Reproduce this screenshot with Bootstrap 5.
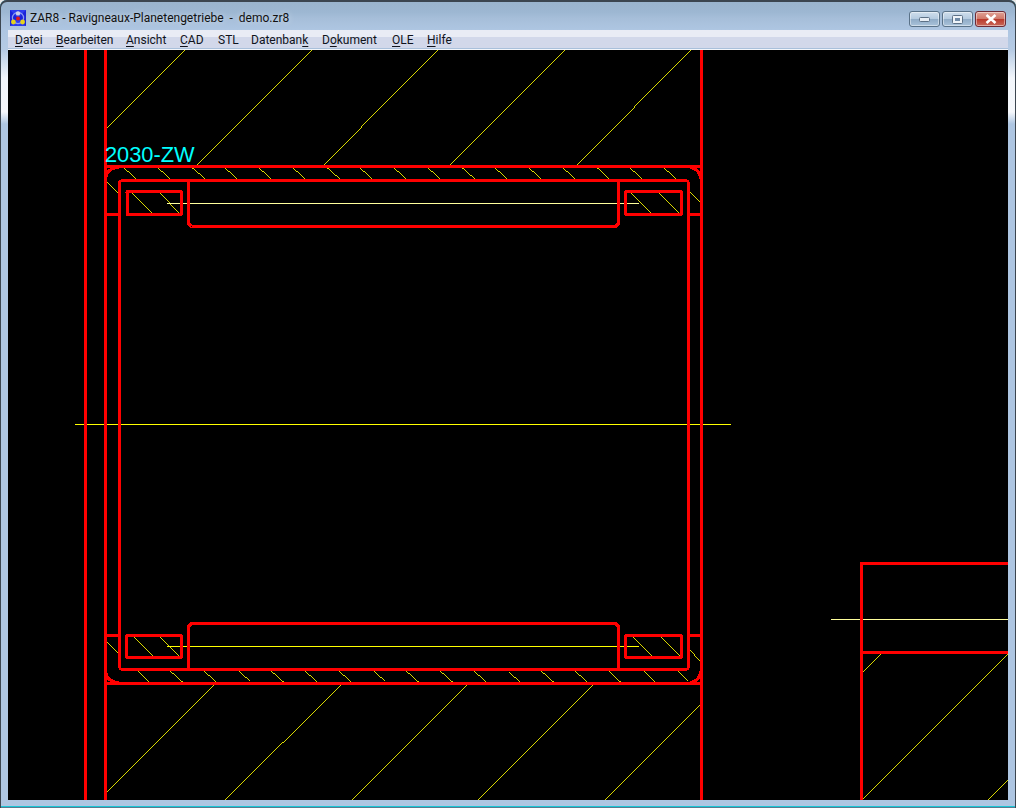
<!DOCTYPE html>
<html lang="de">
<head>
<meta charset="utf-8">
<title>ZAR8 - Ravigneaux-Planetengetriebe - demo.zr8</title>
<link href="https://cdn.jsdelivr.net/npm/bootstrap@5.3.0/dist/css/bootstrap.min.css" rel="stylesheet">
<style>
html,body{margin:0;height:100%;background:#e9e9e9;overflow:hidden}
.aero-win{width:1016px;height:808px;border-radius:7px 7px 0 0;box-shadow:inset 0 1px 0 1px #3c4650,inset 0 0 0 1px #5b7a90,inset 0 -1px 0 1px #19c6d6;
 background:linear-gradient(180deg,#9ab4cd 0,#9db7d2 12px,#a6bed9 18px,#aec6e2 30px,#b6cbe4 50px,#f2f6fb 78px,#f6f8fc 112px,#aec6e2 124px,#aec6e2 100%);
 padding:0 8px 8px;font-family:Roboto,"Open Sans",sans-serif;color:#10131c}
.title-strip{height:30px;margin:0 -7px;padding:0 9px}
.app-glyph{width:16px;height:16px;margin:10px 4px 0 0;flex:none}
.title-text{font-size:12px;line-height:16px;white-space:pre;color:#111;margin-top:10px;text-shadow:0 0 6px rgba(255,255,255,.55)}
.cap-group{margin-top:11px;gap:2px}
.cap-btn{width:31px;height:16px;border:1px solid #5a7288;border-radius:3px;box-shadow:inset 0 0 0 1px rgba(255,255,255,.45);background:linear-gradient(180deg,#cfdeec 0,#b5cbe0 48%,#8fabc6 50%,#a9c2da 100%);padding:0}
.cap-close{border-color:#6e2a35;background:linear-gradient(180deg,#e0a296 0,#d0796a 48%,#b9382a 50%,#c9685a 100%)}
.cap-btn svg{display:block;margin:auto}
.menu-strip{height:18px;font-size:12px;background:linear-gradient(180deg,#e9ecf5 0,#e9ecf5 7px,#d2d8ea 7px,#d2d8ea 100%);padding-left:7px;line-height:20px;flex:none;color:#10131c}
.menu-item{display:block;color:inherit;text-decoration:none;white-space:nowrap}
.menu-item u{text-underline-offset:2px}
.m1{width:41px}.m2{width:70px}.m3{width:54px}.m4{width:38px}.m5{width:33px}.m6{width:71px}.m7{width:70px}.m8{width:35px}
.menu-rule{height:2px;flex:none;background:linear-gradient(180deg,#a9c0db 0,#a9c0db 50%,#f2f5fa 50%)}
.cad-view{width:1000px;height:750px;background:#000;flex:none;overflow:hidden}
.cad-view svg{display:block}
.red path,.red line,.red rect{fill:none;stroke:#f00;stroke-width:3}
.yel line{stroke:#ff0;stroke-width:.85}
.pale{stroke:#ffff9c;stroke-width:1}
.lbl{font-family:"Liberation Sans",Arial,sans-serif;font-size:21.8px;fill:#0ff}
</style>
</head>
<body>
<div class="aero-win d-flex flex-column">
  <div class="title-strip d-flex align-items-start">
    <svg class="app-glyph" viewBox="0 0 16 16" aria-hidden="true">
      <rect width="16" height="16" fill="#1a24d8"/>
      <path d="M0 0H16L8 8ZM0 16H16L8 8Z" fill="#2c3cf0"/>
      <circle cx="8" cy="8" r="5.6" fill="none" stroke="#8c9cf0" stroke-width="1.2"/>
      <circle cx="8" cy="3.4" r="2.2" fill="#c9cfe8"/>
      <circle cx="3.4" cy="12" r="2.4" fill="#e6d21c"/>
      <circle cx="12.6" cy="12" r="2.4" fill="#e6d21c"/>
      <circle cx="8" cy="8.4" r="2" fill="#e01818"/>
    </svg>
    <span class="title-text flex-grow-1">ZAR8 - Ravigneaux-Planetengetriebe  -  demo.zr8</span>
    <div class="cap-group d-flex align-items-start">
      <button class="cap-btn" type="button" aria-label="Minimieren"><svg width="11" height="5" viewBox="0 0 11 5"><rect x=".5" y=".5" width="10" height="4" rx="1" fill="#e8eef5" stroke="#5d7186"/></svg></button>
      <button class="cap-btn" type="button" aria-label="Maximieren"><svg width="11" height="9" viewBox="0 0 11 9"><rect x=".5" y=".5" width="10" height="8" rx="1" fill="#eef3f8" stroke="#5d7186"/><rect x="3" y="3" width="5" height="3" fill="#6f8aa6"/></svg></button>
      <button class="cap-btn cap-close" type="button" aria-label="Schließen"><svg width="12" height="10" viewBox="0 0 12 10"><path d="M1.5 1 10.5 9M10.5 1 1.5 9" stroke="#fff" stroke-width="2.6" fill="none"/></svg></button>
    </div>
  </div>
  <nav class="menu-strip d-flex">
    <a class="menu-item m1" href="#"><u>D</u>atei</a>
    <a class="menu-item m2" href="#"><u>B</u>earbeiten</a>
    <a class="menu-item m3" href="#"><u>A</u>nsicht</a>
    <a class="menu-item m4" href="#"><u>C</u>AD</a>
    <a class="menu-item m5" href="#">STL</a>
    <a class="menu-item m6" href="#">Datenban<u>k</u></a>
    <a class="menu-item m7" href="#">D<u>o</u>kument</a>
    <a class="menu-item m8" href="#"><u>O</u>LE</a>
    <a class="menu-item m9" href="#"><u>H</u>ilfe</a>
  </nav>
  <div class="menu-rule"></div>
  <div class="cad-view">
    <svg width="1000" height="750" viewBox="8 50 1000 750" shape-rendering="crispEdges">
      <g class="yel">
        <line x1="185" y1="50" x2="105" y2="130.5"/>
        <line x1="311.5" y1="50" x2="197" y2="165"/>
        <line x1="437.5" y1="50" x2="324" y2="165"/>
        <line x1="565" y1="50" x2="450" y2="165"/>
        <line x1="691" y1="50" x2="577" y2="165"/>
        <line x1="214" y1="685" x2="105" y2="794"/>
        <line x1="341" y1="685" x2="225" y2="800"/>
        <line x1="467" y1="685" x2="352" y2="800"/>
        <line x1="593" y1="685" x2="478" y2="800"/>
        <line x1="700.5" y1="704" x2="605" y2="800"/>
        <line x1="880.5" y1="654" x2="861" y2="673.5"/>
        <line x1="1008" y1="654" x2="862" y2="800"/>
        <line x1="1008" y1="780" x2="988" y2="800"/>
        <line x1="105" y1="180.5" x2="118.5" y2="193.5"/>
        <line x1="688" y1="190" x2="700.5" y2="202.5"/>
        <line x1="105.5" y1="639.5" x2="118.5" y2="652.5"/>
        <line x1="688" y1="648" x2="700.5" y2="661.5"/>
        <line x1="131.5" y1="191.5" x2="153.5" y2="213.5"/>
        <line x1="159.5" y1="191.5" x2="180.5" y2="213.5"/>
        <line x1="630.5" y1="191.5" x2="652.5" y2="213.5"/>
        <line x1="658.5" y1="191.5" x2="680.5" y2="213.5"/>
        <line x1="131.5" y1="635.5" x2="153.5" y2="657"/>
        <line x1="159.5" y1="635.5" x2="180.5" y2="657"/>
        <line x1="630.5" y1="635.5" x2="652.5" y2="657"/>
        <line x1="658.5" y1="635.5" x2="680.5" y2="657"/>
        <line x1="124" y1="168" x2="137.5" y2="180"/><line x1="158" y1="168" x2="171.5" y2="180"/><line x1="191.5" y1="168" x2="205.5" y2="180"/><line x1="225" y1="168" x2="238.5" y2="180"/><line x1="259" y1="168" x2="272.5" y2="180"/><line x1="293" y1="168" x2="306.5" y2="180"/><line x1="326.5" y1="168" x2="340" y2="180"/><line x1="360" y1="168" x2="373.5" y2="180"/><line x1="394" y1="168" x2="407.5" y2="180"/><line x1="428" y1="168" x2="441.5" y2="180"/><line x1="461.5" y1="168" x2="475" y2="180"/><line x1="495" y1="168" x2="508.5" y2="180"/><line x1="529" y1="168" x2="542.5" y2="180"/><line x1="563" y1="168" x2="576.5" y2="180"/><line x1="596.5" y1="168" x2="609.5" y2="180"/><line x1="630" y1="168" x2="643.5" y2="180"/><line x1="664" y1="168" x2="677.5" y2="180"/>
        <line x1="135.5" y1="670" x2="148.5" y2="682"/><line x1="169" y1="670" x2="182.5" y2="682"/><line x1="203" y1="670" x2="216" y2="682"/><line x1="236.5" y1="670" x2="250" y2="682"/><line x1="270" y1="670" x2="283.5" y2="682"/><line x1="304" y1="670" x2="317" y2="682"/><line x1="338" y1="670" x2="351" y2="682"/><line x1="371.5" y1="670" x2="385" y2="682"/><line x1="405" y1="670" x2="418.5" y2="682"/><line x1="439" y1="670" x2="452.5" y2="682"/><line x1="473" y1="670" x2="486" y2="682"/><line x1="506.5" y1="670" x2="520" y2="682"/><line x1="540" y1="670" x2="553.5" y2="682"/><line x1="574" y1="670" x2="587" y2="682"/><line x1="608" y1="670" x2="620.5" y2="682"/><line x1="641.5" y1="670" x2="654.5" y2="682"/><line x1="675.5" y1="670" x2="688" y2="682"/>
      </g>
      <line class="pale" x1="167" y1="203.5" x2="639" y2="203.5"/>
      <line x1="167" y1="646.5" x2="639" y2="646.5" stroke="#ff0"/>
      <line x1="75" y1="424.5" x2="731" y2="424.5" stroke="#ff0"/>
      <line class="pale" x1="831" y1="619.5" x2="1008" y2="619.5"/>
      <g class="red">
        <line x1="85.5" y1="50" x2="85.5" y2="800"/>
        <line x1="105.5" y1="50" x2="105.5" y2="800"/>
        <line x1="701.5" y1="50" x2="701.5" y2="800"/>
        <line x1="104" y1="166.5" x2="703" y2="166.5"/>
        <line x1="104" y1="683.5" x2="703" y2="683.5"/>
        <path d="M105.5 180Q106 168 119 167.5"/>
        <path d="M690 167.5Q699 168 701 179"/>
        <path d="M105.5 670Q106 682 119 682.5"/>
        <path d="M690 682.5Q699 682 701 671"/>
        <rect x="119.5" y="180.5" width="569" height="489" rx="3"/>
        <line x1="105" y1="214.5" x2="119" y2="214.5"/>
        <line x1="689" y1="214.5" x2="701" y2="214.5"/>
        <line x1="105" y1="635.5" x2="119" y2="635.5"/>
        <line x1="689" y1="635.5" x2="701" y2="635.5"/>
        <rect x="127" y="191.5" width="54.5" height="23" rx="1"/>
        <rect x="625.5" y="191.5" width="56" height="23" rx="1"/>
        <rect x="126.5" y="635.5" width="55" height="22" rx="1"/>
        <rect x="625.5" y="635.5" width="56" height="22" rx="1"/>
        <path d="M188.5 181V223.5L191.5 226.5H615.5L618.5 223.5V181"/>
        <path d="M188.5 669V626.5L191.5 623.5H615.5L618.5 626.5V669"/>
        <path d="M1008 563.5H861.5V800"/>
        <line x1="861.5" y1="652.5" x2="1008" y2="652.5"/>
      </g>
      <text class="lbl" x="105" y="162">2030-ZW</text>
    </svg>
  </div>
</div>
<script src="https://cdn.jsdelivr.net/npm/bootstrap@5.3.0/dist/js/bootstrap.bundle.min.js"></script>
</body>
</html>
